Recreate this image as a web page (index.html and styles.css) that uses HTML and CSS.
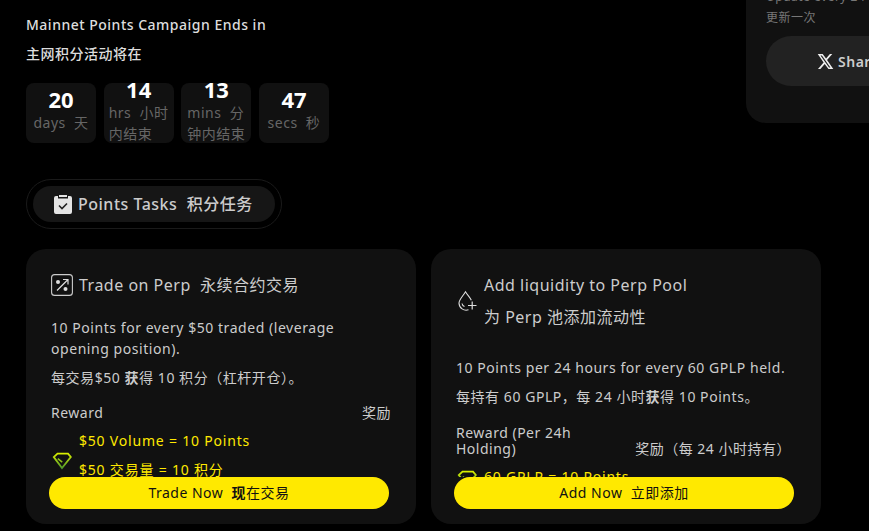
FILE: index.html
```html
<!DOCTYPE html>
<html lang="zh">
<head>
    <meta charset="UTF-8">
    <meta name="viewport" content="width=device-width, initial-scale=1.0">
    <title>Points Campaign</title>
    <link rel="stylesheet" href="styles.css">
</head>
<body>
    <div class="page">
        <div class="hero">
            <div class="campaign">
                <p class="campaign-title">Mainnet Points Campaign Ends in</p>
                <p class="campaign-title second">主网积分活动将在</p>
                <div class="timer">
                    <div class="timer-box"><span class="num">20</span><span class="unit">days&nbsp; 天</span></div>
                    <div class="timer-box"><span class="num">14</span><span class="unit">hrs&nbsp; 小时<br>内结束</span></div>
                    <div class="timer-box"><span class="num">13</span><span class="unit">mins&nbsp; 分<br>钟内结束</span></div>
                    <div class="timer-box"><span class="num">47</span><span class="unit">secs&nbsp; 秒</span></div>
                </div>
                <div class="tab-ring">
                    <div class="tab">
                        <svg class="tab-icon" viewBox="0 0 18 19">
                            <path fill="#e4e4e4" d="M2 1h2v2.500h10V1h2a2 2 0 0 1 2 2v14a2 2 0 0 1-2 2H2a2 2 0 0 1-2-2V3a2 2 0 0 1 2-2z"/>
                            <path fill="#e4e4e4" d="M5 0h8v2H5z"/>
                            <path fill="none" stroke="#222" stroke-width="1.6" d="M5 10.500l3 3 5-5"/>
                        </svg>
                        <span>Points Tasks&nbsp; 积分任务</span>
                    </div>
                </div>
            </div>
            <div class="share-panel">
                <p class="update">Update every 24 hours</p>
                <p class="update">更新一次</p>
                <div class="share-btn">
                    <svg class="x-icon" viewBox="0 0 24 24">
                        <path fill="#eee" d="M18.200 1.500h3.400l-7.400 8.500L23 22.500h-6.800l-5.300-7-6.100 7H1.400l7.900-9.100L1 1.500h7l4.800 6.400zM17 20.400h1.900L6.900 3.500H4.900z"/>
                    </svg>
                    <span>Share</span>
                </div>
            </div>
        </div>

        <div class="cards">
            <div class="card">
                <div class="card-body">
                    <div class="card-title">
                        <svg class="title-icon" viewBox="0 0 22 22">
                            <rect x="0.6" y="0.6" width="20.8" height="20.8" rx="3" fill="none" stroke="#ccc" stroke-width="1.1"/>
                            <circle cx="7" cy="8" r="2" fill="#ddd"/>
                            <circle cx="14.500" cy="15" r="2" fill="#ddd"/>
                            <path fill="none" stroke="#ddd" stroke-width="1.2" d="M6 16.500L16.500 6M12 5.500h5v5"/>
                        </svg>
                        <h2>Trade on Perp&nbsp; 永续合约交易</h2>
                    </div>
                    <p class="desc">10 Points for every $50 traded (leverage opening position).</p>
                    <p class="desc second">每交易$50 <b>获</b>得 10 积分（杠杆开仓）。</p>
                    <div class="reward-head">
                        <span>Reward</span>
                        <span>奖励</span>
                    </div>
                    <div class="reward">
                        <svg class="gem" viewBox="0 0 20 18">
                            <defs>
                                <linearGradient id="gem1" x1="0" y1="0" x2="0" y2="1">
                                    <stop offset="0" stop-color="#d9ee00"/>
                                    <stop offset="1" stop-color="#4f9a2a"/>
                                </linearGradient>
                            </defs>
                            <path fill="none" stroke="url(#gem1)" stroke-width="1.8" d="M5.500 1.700h10.500l2.800 3.300-8.800 11-8.200-11z"/>
                            <path fill="none" stroke="#8fc21a" stroke-width="1.6" d="M5.800 6.600l4.400 3.600"/>
                        </svg>
                        <div class="reward-text">
                            <p>$50 Volume = 10 Points</p>
                            <p class="second">$50 交易量 = 10 积分</p>
                        </div>
                    </div>
                </div>
                <div class="action">Trade Now&nbsp; <b>现</b>在交易</div>
            </div>

            <div class="card">
                <div class="card-body">
                    <div class="card-title tall">
                        <svg class="title-icon drop" viewBox="0 0 20 22">
                            <path fill="none" stroke="#ddd" stroke-width="1.1" d="M11.500 19.800A7.200 7.200 0 0 1 2 13.200C2 9.500 6 6 8.500 1.800 10.500 5 13 7.500 14.300 10.200"/>
                            <path fill="none" stroke="#ddd" stroke-width="1.1" d="M5 13.500c.2 1.500 1 2.500 2.500 3"/>
                            <path fill="none" stroke="#ddd" stroke-width="1.2" d="M11 15.500h8.500M15.200 11.500v8"/>
                        </svg>
                        <h2>Add liquidity to Perp Pool<span class="line">为 Perp 池添加流动性</span></h2>
                    </div>
                    <p class="desc">10 Points per 24 hours for every 60 GPLP held.</p>
                    <p class="desc second">每持有 60 GPLP，每 24 小时<b>获</b>得 10 Points。</p>
                    <div class="reward-head wide">
                        <span class="reward-label">Reward (Per 24h Holding)</span>
                        <span class="reward-zh">奖励（每 24 小时持有）</span>
                    </div>
                    <div class="reward low">
                        <svg class="gem" viewBox="0 0 20 18">
                            <path fill="none" stroke="url(#gem1)" stroke-width="1.8" d="M5.500 1.700h10.500l2.800 3.300-8.800 11-8.200-11z"/>
                            <path fill="none" stroke="#8fc21a" stroke-width="1.6" d="M5.800 6.600l4.400 3.600"/>
                        </svg>
                        <div class="reward-text">
                            <p>60 GPLP = 10 Points</p>
                            <p class="second">60 GPLP = 10 积分</p>
                        </div>
                    </div>
                </div>
                <div class="action">Add Now&nbsp; 立即添加</div>
            </div>
        </div>
    </div>
</body>
</html>
```

FILE: styles.css
```css
html, body {
    margin: 0;
    height: 100%;
    background-color: #000;
    overflow: hidden;
}

body {
    font-family: "Noto Sans", "Noto Sans CJK SC", sans-serif;
    letter-spacing: 0.5px;
    color: #ccc;
}

p, h2 {
    margin: 0;
}

.page {
    width: 869px;
    height: 531px;
    overflow: hidden;
}

.hero {
    display: flex;
    justify-content: space-between;
    height: 179px;
    padding-left: 26px;
}

/* countdown */
.campaign-title {
    font-size: 14px;
    line-height: 21px;
    font-weight: 500;
    color: #ddd;
}

.campaign-title:first-child {
    padding-top: 14px;
}

.timer {
    display: flex;
    gap: 7.67px;
    margin-top: 19px;
}

.timer-box {
    display: flex;
    flex-direction: column;
    align-items: center;
    justify-content: center;
    box-sizing: border-box;
    width: 70px;
    height: 60px;
    padding: 0 5px 6px;
    background-color: #111;
    border-radius: 8px;
}

.num {
    margin-bottom: 1px;
    font-size: 22px;
    line-height: 24px;
    font-weight: 700;
    color: #fff;
    letter-spacing: 0;
}

.unit {
    font-size: 14px;
    line-height: 21px;
    color: #666;
    white-space: nowrap;
}

.tab-ring {
    display: inline-block;
    margin-top: 36px;
    padding: 6px;
    border: 1px solid #1a1a1a;
    border-radius: 25px;
}

.tab {
    display: flex;
    align-items: center;
    gap: 6px;
    box-sizing: border-box;
    width: 242px;
    height: 36px;
    padding: 0 0 2px 21px;
    background-color: #161616;
    border-radius: 18px;
    font-size: 16px;
    font-weight: 500;
    color: #ccc;
}

.tab-icon {
    width: 18px;
    height: 19px;
    margin-top: 2px;
}

/* share panel, cut off by the window */
.share-panel {
    box-sizing: border-box;
    flex: none;
    width: 123px;
    height: 123px;
    padding: 0 0 0 20px;
    background-color: #111;
    border-bottom-left-radius: 20px;
    overflow: hidden;
}

.update {
    font-size: 12px;
    line-height: 17px;
    color: #777;
    white-space: nowrap;
}

.update:first-child {
    margin-top: -12px;
}

.update + .update {
    margin-top: 4px;
}

.share-btn {
    display: flex;
    align-items: center;
    gap: 4px;
    box-sizing: border-box;
    width: 200px;
    height: 50px;
    margin-top: 10px;
    padding-left: 51px;
    background-color: #222;
    border-radius: 25px;
    font-size: 14px;
    font-weight: 600;
    color: #ccc;
}

.x-icon {
    width: 17px;
    height: 17px;
}

/* task cards */
.cards {
    display: flex;
    gap: 15px;
    padding: 70px 0 0 26px;
}

.card {
    display: flex;
    flex-direction: column;
    box-sizing: border-box;
    width: 390px;
    height: 275px;
    padding: 24px 25px 15px;
    background-color: #111;
    border-radius: 20px;
}

.card-body {
    flex: 1;
    min-height: 0;
    overflow: hidden;
}

.card-title {
    display: flex;
    align-items: center;
    gap: 6px;
    margin-bottom: 20px;
}

.card-title.tall {
    margin-bottom: 28px;
}

h2 {
    font-size: 16px;
    line-height: 24px;
    font-weight: 400;
    color: #ccc;
}

h2 .line {
    display: block;
    margin-top: 8px;
}

.title-icon {
    flex: none;
    width: 22px;
    height: 22px;
}

.desc {
    font-size: 14px;
    line-height: 21px;
    letter-spacing: 0.55px;
    color: #ccc;
}

.second {
    margin-top: 8px;
}

.desc b, .action b {
    font-weight: 700;
}

.reward-head {
    display: flex;
    justify-content: space-between;
    align-items: flex-end;
    margin-top: 17px;
    font-size: 14px;
    line-height: 16px;
    color: #ccc;
}

.reward-head.wide {
    margin-top: 18px;
}

.reward-label {
    width: 150px;
}

.reward-zh {
    margin-right: 5px;
}

.reward {
    display: flex;
    align-items: flex-start;
    gap: 7px;
    margin-top: 9px;
}

.gem {
    flex: none;
    width: 20px;
    height: 18px;
    margin: 22px 0 0 1px;
}

.reward.low .gem {
    margin-top: 4px;
}

.reward-text {
    font-size: 14px;
    line-height: 21px;
    letter-spacing: 0.8px;
    color: #ffe900;
}

.action {
    flex: none;
    width: 340px;
    height: 32px;
    margin-left: -2px;
    line-height: 32px;
    background-color: #ffe900;
    border-radius: 16px;
    font-size: 14px;
    text-align: center;
    color: #111;
}
```
